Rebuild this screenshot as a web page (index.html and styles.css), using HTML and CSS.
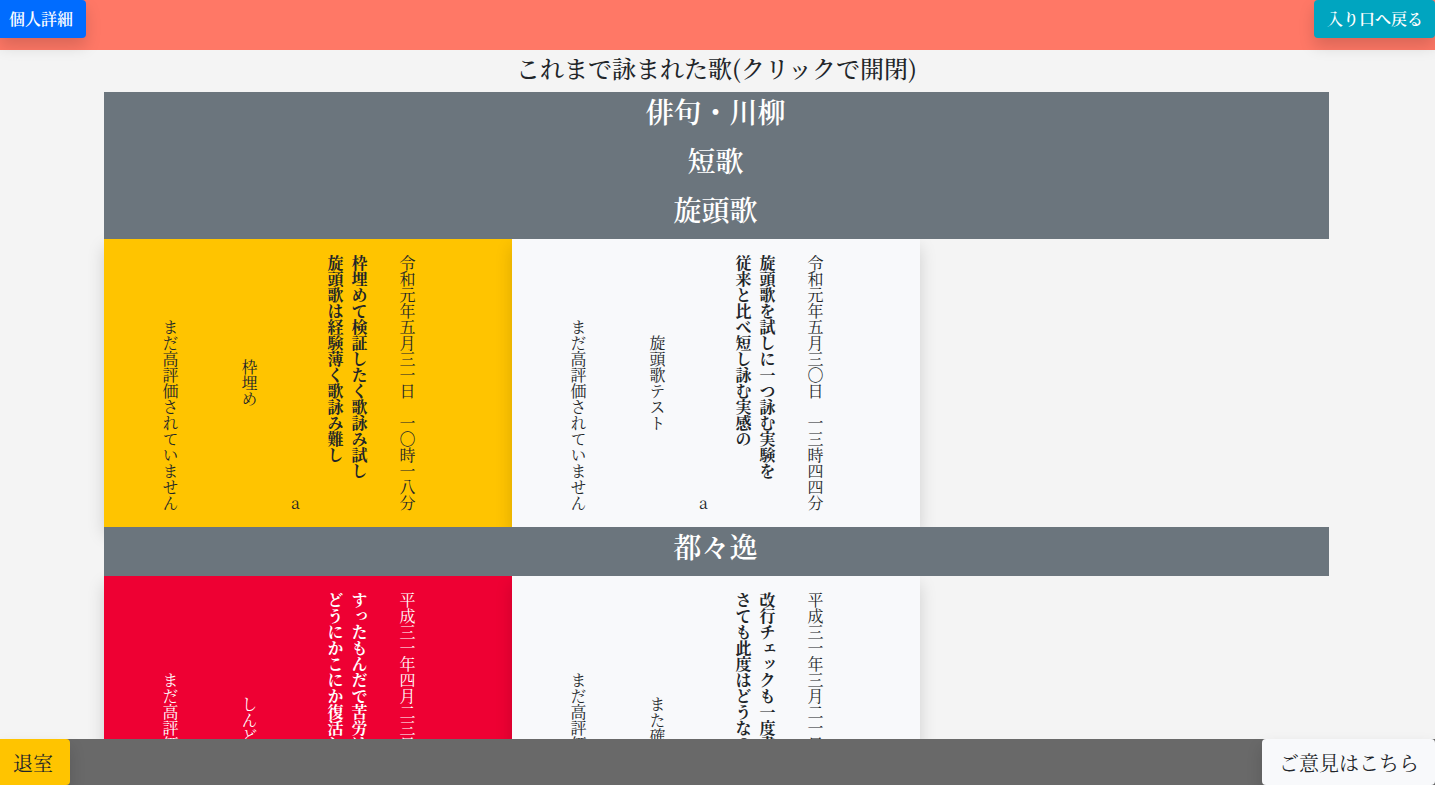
FILE: index.html
```html
<!DOCTYPE html>
<html lang="ja">
<head>
<meta charset="utf-8">
<meta name="viewport" content="width=device-width, initial-scale=1">
<title>これまで詠まれた歌</title>
<link rel="stylesheet" href="styles.css">
</head>
<body>
<header class="topbar">
  <button type="button" class="btn btn-primary btn-left">個人詳細</button>
  <button type="button" class="btn btn-info">入り口へ戻る</button>
</header>

<main class="content">
  <h1 class="title">これまで詠まれた歌(クリックで開閉)</h1>

  <h2 class="genre"><button type="button" class="genre-toggle">俳句・川柳</button></h2>
  <h2 class="genre"><button type="button" class="genre-toggle">短歌</button></h2>
  <h2 class="genre"><button type="button" class="genre-toggle">旋頭歌</button></h2>
  <section class="poems">
    <article class="poem poem-yellow">
      <p class="date">令和元年五月三一日　一〇時一八分</p>
      <p class="verse">枠埋めて検証したく歌詠み試し<br>旋頭歌は経験薄く歌詠み難し</p>
      <p class="author">a</p>
      <p class="topic">枠埋め</p>
      <p class="rating">まだ高評価されていません</p>
    </article>
    <article class="poem poem-light">
      <p class="date">令和元年五月三〇日　一三時四四分</p>
      <p class="verse">旋頭歌を試しに一つ詠む実験を<br>従来と比べ短し詠む実感の</p>
      <p class="author">a</p>
      <p class="topic">旋頭歌テスト</p>
      <p class="rating">まだ高評価されていません</p>
    </article>
  </section>

  <h2 class="genre"><button type="button" class="genre-toggle">都々逸</button></h2>
  <section class="poems">
    <article class="poem poem-red">
      <p class="date">平成三一年四月二三日　一〇時二八分</p>
      <p class="verse">すったもんだで苦労は<br>どうにかこにか復活し</p>
      <p class="author">a</p>
      <p class="topic">しんどい</p>
      <p class="rating">まだ高評価されていません</p>
    </article>
    <article class="poem poem-light">
      <p class="date">平成三一年三月二一日　一三時四四分</p>
      <p class="verse">改行チェックも一度書<br>さても此度はどうなの</p>
      <p class="author">a</p>
      <p class="topic">また確認</p>
      <p class="rating">まだ高評価されていません</p>
    </article>
  </section>
</main>

<footer class="bottombar">
  <button type="button" class="btn btn-large btn-warning btn-left">退室</button>
  <button type="button" class="btn btn-large btn-light">ご意見はこちら</button>
</footer>
</body>
</html>
```
FILE: styles.css
```css
* {
  box-sizing: border-box;
}

html {
  scrollbar-width: none;
}

body {
  margin: 0;
  padding: 50px 0 46px;
  background: #f4f4f4;
  color: #212529;
  font-family: "Noto Serif CJK JP", "Noto Serif JP", "Noto Serif", "Liberation Serif", "Noto Sans CJK JP", serif;
  font-size: 16px;
  line-height: 24px;
}

.topbar,
.bottombar {
  position: fixed;
  z-index: 2;
  left: 0;
  right: 0;
  display: flex;
  justify-content: space-between;
  align-items: flex-start;
}

.topbar {
  top: 0;
  height: 50px;
  background: #ff7866;
}

.bottombar {
  bottom: 0;
  background: #696969;
}

.btn {
  padding: 7px 12px 7px 13px;
  border: 0;
  border-radius: 4px;
  box-shadow: 0 8px 16px rgba(0, 0, 0, 0.15);
  color: #fff;
  font: inherit;
  font-weight: 600;
  cursor: pointer;
}

.btn-left {
  padding-left: 9px;
  padding-right: 13px;
  border-radius: 0 4px 4px 0;
}

.btn-large {
  padding: 9px 16px 7px 17px;
  font-size: 20px;
  font-weight: 400;
  line-height: 30px;
}

.btn-large.btn-left {
  padding-left: 13px;
  padding-right: 17px;
}

.btn-primary { background: #006cff; }
.btn-info { background: #00a5c0; }
.btn-warning { background: #ffc400; color: #212529; }
.btn-light { background: #f8f9fb; color: #212529; }

.content {
  padding: 0 106px 0 104px;
}

.title {
  margin: 0;
  padding: 3px 0 9px;
  font-size: 24px;
  font-weight: 500;
  line-height: 30px;
  text-align: center;
}

.genre {
  position: relative;
  margin: 0;
  background: #6b757d;
}

.genre-toggle {
  display: block;
  width: 100%;
  padding: 2px 2px 13px 0;
  border: 0;
  background: none;
  color: #fff;
  font: inherit;
  font-size: 28px;
  font-weight: 600;
  line-height: 34px;
  text-align: center;
  cursor: pointer;
}

.poems {
  display: grid;
  grid-template-columns: repeat(3, 1fr);
  padding-right: 1px;
}

.poem {
  display: flex;
  flex-direction: row-reverse;
  padding: 16px 93px 16px 0;
  box-shadow: 0 8px 16px rgba(0, 0, 0, 0.15);
}

.poem p {
  margin: 0;
  writing-mode: vertical-rl;
  white-space: nowrap;
}

.poem .verse {
  margin-right: 24px;
  font-weight: 700;
}

.poem .author {
  align-self: flex-end;
  margin-right: 16px;
  text-orientation: upright;
}

.poem .topic {
  align-self: center;
  margin-right: 22px;
}

.poem .rating {
  align-self: flex-end;
  margin-right: 55px;
}

.poem-yellow { background: #ffc400; }
.poem-light { background: #f8f9fb; }
.poem-red { background: #ee0033; color: #fff; }
```
